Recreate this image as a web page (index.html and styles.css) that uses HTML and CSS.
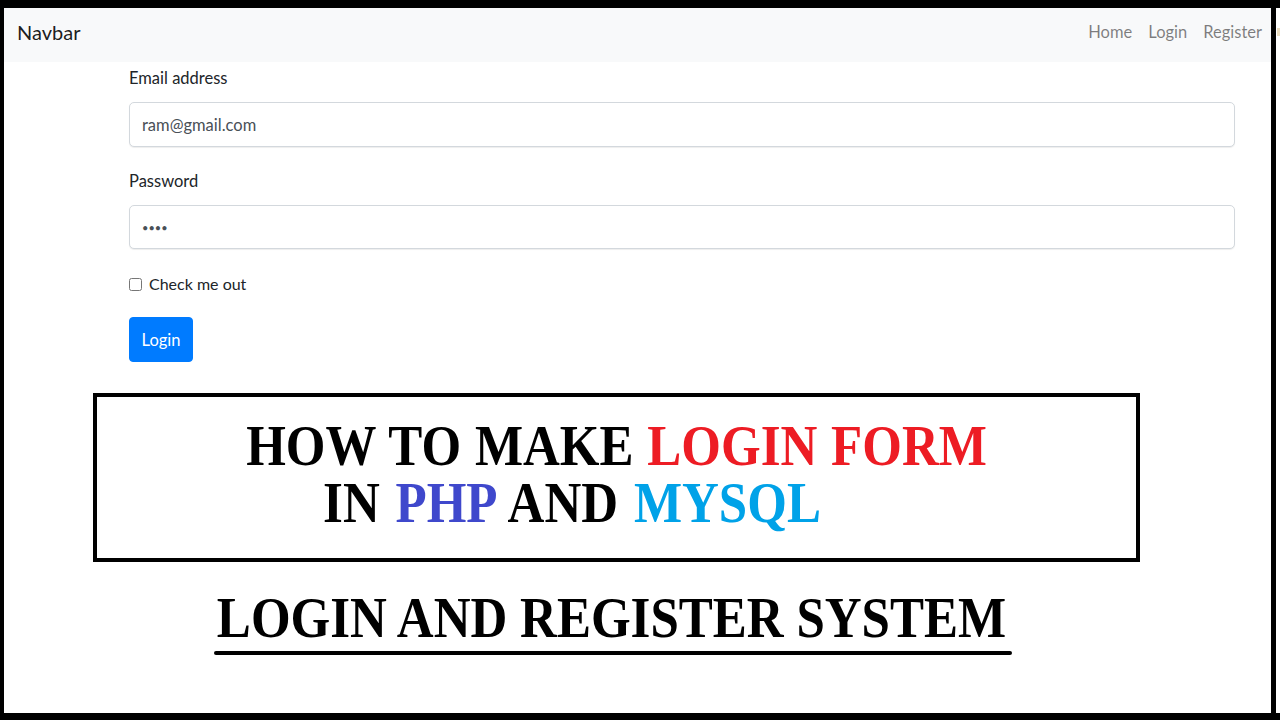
FILE: index.html
```html
<!DOCTYPE html>
<html lang="en">
<head>
<meta charset="utf-8">
<title>Login Form</title>
<link rel="stylesheet" href="styles.css">
</head>
<body>
<div class="page">
  <div class="screen">
    <nav class="navbar">
      <a class="brand" href="#">Navbar</a>
      <ul class="nav-links">
        <li><a href="#">Home</a></li>
        <li><a href="#">Login</a></li>
        <li><a href="#">Register</a></li>
      </ul>
    </nav>
    <form class="login-form">
      <div class="form-group">
        <label class="form-label" for="email">Email address</label>
        <input class="form-control" id="email" type="email" value="ram@gmail.com">
      </div>
      <div class="form-group form-group-pass">
        <label class="form-label" for="pass">Password</label>
        <input class="form-control form-control-pass" id="pass" type="password" value="ramm">
      </div>
      <div class="form-check">
        <input class="check-input" id="check" type="checkbox">
        <label class="check-label" for="check">Check me out</label>
      </div>
      <button class="btn-login" type="button">Login</button>
    </form>
    <div class="title-box">
      <div class="title-text">
        <div class="title-line title-line-1">HOW TO MAKE <span class="red">LOGIN FORM</span></div>
        <div class="title-line title-line-2">IN <span class="indigo">PHP</span> AND <span class="cyan">MYSQL</span></div>
      </div>
    </div>
    <div class="subtitle-wrap">
      <div class="subtitle">LOGIN AND REGISTER SYSTEM</div>
      <div class="subtitle-rule"></div>
    </div>
  </div>
  <div class="edge"><span class="edge-mark"></span></div>
</div>
</body>
</html>
```
FILE: styles.css
```css
* { box-sizing: border-box; }
html, body { margin: 0; padding: 0; background: #fff; }
body { font-family: Lato, "Liberation Sans", Arial, sans-serif; color: #212529; }

.page {
  width: 1280px;
  height: 720px;
  display: flex;
  border-top: 8px solid #000;
  border-bottom: 7px solid #000;
  overflow: hidden;
}
.screen {
  flex: 0 0 1276px;
  border-left: 4px solid #000;
  border-right: 5px solid #000;
  background: #fff;
}
.edge { flex: 1; background: #fff; padding-top: 20px; }
.edge-mark { display: block; width: 3px; height: 8px; margin-left: 1px; background: #e9dcc0; }

.navbar {
  height: 54px;
  background: #f8f9fa;
  display: flex;
  align-items: center;
  justify-content: space-between;
  padding: 0 1px 7px 13px;
}
.brand {
  font-size: 20px;
  color: rgba(0,0,0,.9);
  text-decoration: none;
  line-height: 30px;
}
.nav-links { list-style: none; margin: 0; padding: 0; display: flex; }
.nav-links a {
  display: block;
  padding: 0 8px;
  font-size: 16.5px;
  line-height: 24px;
  color: rgba(0,0,0,.5);
  text-decoration: none;
}

.login-form {
  margin: 4px 0 0 125px;
  width: 1106px;
  display: flex;
  flex-direction: column;
  align-items: flex-start;
}
.form-group { width: 100%; display: flex; flex-direction: column; }
.form-group-pass { margin-top: 22px; }
.form-label { font-size: 16.5px; line-height: 24px; margin-bottom: 12px; color: #212529; }
.form-control {
  width: 100%;
  height: 45px;
  padding: 0 12px;
  font-family: inherit;
  font-size: 16.5px;
  color: #495057;
  background: #fff;
  border: 1px solid #d3d8dd;
  border-radius: 5px;
  box-shadow: 0 1px 1px rgba(0,0,0,.07);
  outline: none;
}
.form-control-pass { height: 44px; font-size: 11px; }

.form-check {
  margin-top: 23px;
  height: 24px;
  display: flex;
  align-items: center;
  gap: 7px;
}
.check-input { margin: 0; width: 13px; height: 13px; }
.check-label { font-size: 16px; line-height: 24px; color: #212529; }

.btn-login {
  margin-top: 21px;
  width: 64px;
  height: 45px;
  padding: 0;
  font-family: inherit;
  font-size: 16.5px;
  color: #fff;
  background: #007bff;
  border: 1px solid #007bff;
  border-radius: 4px;
}

.title-box {
  margin: 31px 0 0 89px;
  width: 1047px;
  height: 169px;
  border: 4px solid #000;
  padding-top: 26px;
}
.title-text {
  font-family: "Liberation Serif", "Times New Roman", serif;
  font-weight: bold;
  font-size: 51px;
  line-height: 52px;
  color: #000;
  text-align: center;
  transform: scaleY(1.1);
}
.title-line-1 { word-spacing: 1px; }
.title-line-2 { padding-right: 89px; word-spacing: 3px; }
.red { color: #ed1c24; }
.indigo { color: #3f48cc; }
.cyan { color: #00a2e8; }

.subtitle-wrap { margin: 30px 0 0 210px; width: 798px; }
.subtitle {
  font-family: "Liberation Serif", "Times New Roman", serif;
  font-weight: bold;
  font-size: 51px;
  line-height: 52px;
  color: #000;
  text-align: center;
  transform: scaleY(1.1);
  padding-right: 3px;
}
.subtitle-rule {
  margin-top: 7px;
  height: 4px;
  background: #000;
  border-radius: 2px;
}
```
